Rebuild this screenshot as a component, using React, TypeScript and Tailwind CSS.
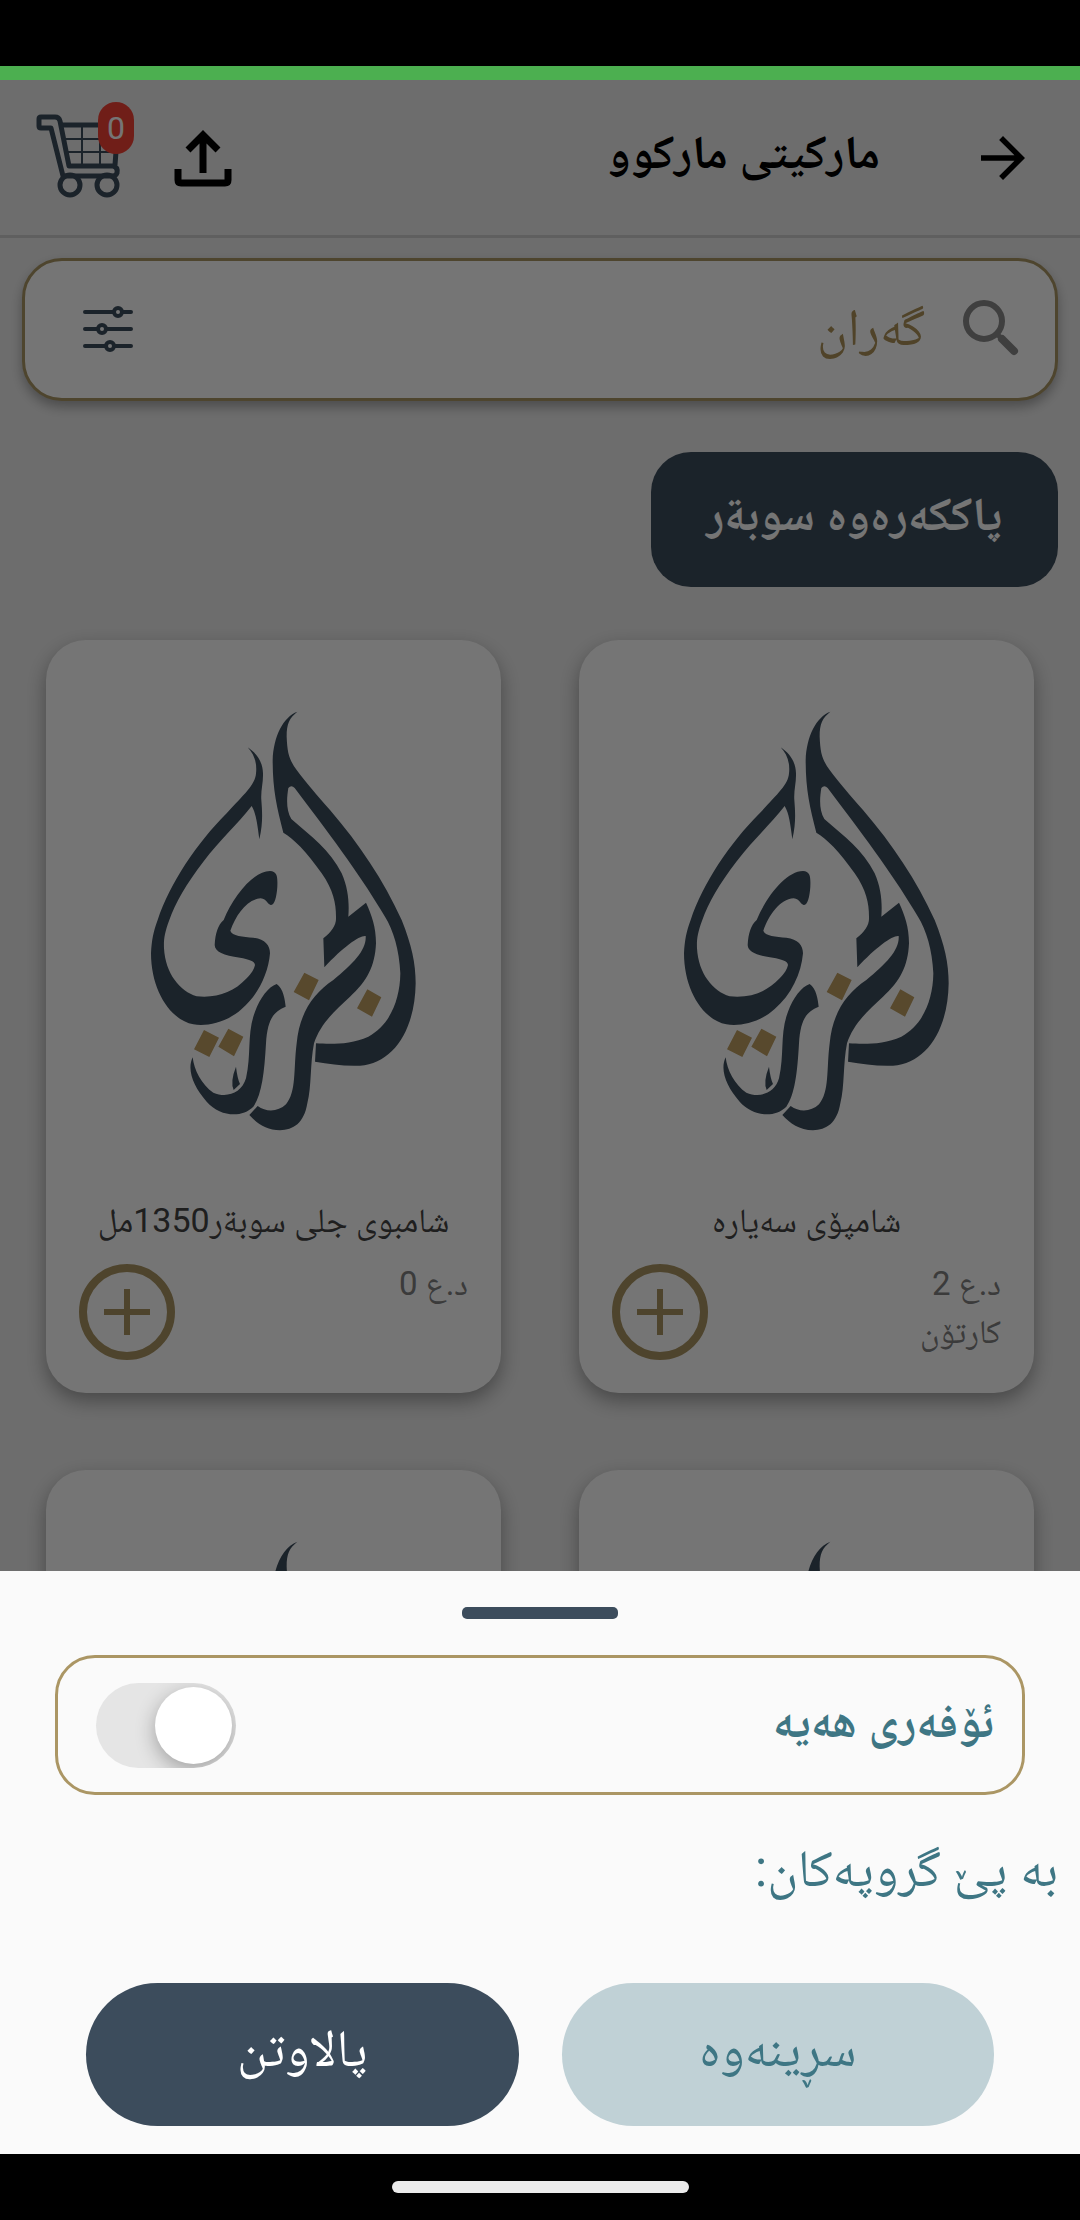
import { MdArrowForward } from "react-icons/md";

type Product = { id: number; name: string; price: string; unit?: string };

const products: Product[] = [
  { id: 1, name: "شامپۆی سەیارە", price: "د.ع 2", unit: "کارتۆن" },
  { id: 2, name: "شامبوی جلی سوبةر1350مل", price: "د.ع 0" },
];

const pendingProducts = [3, 4];

function CartIcon() {
  return (
    <svg width="88" height="88" viewBox="34 114 88 88" fill="none" stroke="#3c4c5c" aria-hidden="true">
      <path d="M82 125V166M100 125V166M64 139H117M67 152H116" strokeWidth="2" />
      <path d="M61 125H118L115 165" strokeWidth="5" />
      <path
        d="M41 117H55Q59 117 60 121L69 166H113Q118 167 117 173Q116 176 112 176H63L51 128H41Q39 128 39 126V119Q39 117 41 117Z"
        strokeWidth="5"
        strokeLinejoin="round"
      />
      <circle cx="70" cy="185" r="10" strokeWidth="5" />
      <circle cx="107" cy="185" r="10" strokeWidth="5" />
    </svg>
  );
}

function ShareIcon() {
  return (
    <svg width="60" height="60" viewBox="0 0 60 60" fill="none" stroke="#000" strokeWidth="7" aria-hidden="true">
      <path d="M30 45V8M15 22L30 7L45 22" />
      <path d="M5 41V52Q5 55 8 55H52Q55 55 55 52V41" />
    </svg>
  );
}

function SlidersIcon() {
  return (
    <svg width="52" height="52" viewBox="0 0 52 52" fill="none" stroke="#3c4c5c" strokeWidth="4" strokeLinecap="round" aria-hidden="true">
      <path d="M3 10H32M41 10H49M3 27H15M24 27H49M3 44H23M32 44H49" />
      <circle cx="36" cy="10" r="4" />
      <circle cx="20" cy="27" r="4" />
      <circle cx="28" cy="44" r="4" />
    </svg>
  );
}

function SearchIcon() {
  return (
    <svg width="58" height="58" viewBox="0 0 58 58" fill="none" stroke="#8a8a8a" aria-hidden="true">
      <circle cx="23" cy="22" r="18" strokeWidth="6" />
      <path d="M36 35L41 40" strokeWidth="5" />
      <path d="M41 40L53 52" strokeWidth="8" strokeLinecap="round" />
    </svg>
  );
}

function BrandLogo() {
  return (
    <svg className="h-[460px] w-[300px]" viewBox="-18 0 900 1380" role="img" aria-label="الجزري">
      <g fill="#3c4c5c">
        <path d="M353 172C380 190 398 215 399 250C400 280 392 300 394 330C397 370 399 400 388 448C382 400 378 370 365 348C320 405 270 450 220 515C170 580 135 640 118 690C103 730 101 750 102 775C106 850 150 905 200 919C260 925 310 908 350 865C365 850 372 838 375 825C374 812 355 808 330 803C280 797 255 785 254 765C256 730 264 705 281 690C310 620 370 543 420 543C442 545 443 560 442 590C440 620 434 645 422 645C410 642 412 627 392 625C350 628 318 675 301 722C305 738 340 740 370 743C405 748 420 765 420 790C415 850 385 915 335 957C290 998 230 1010 190 1003C120 990 63 900 63 790C65 750 70 725 83 690C120 580 200 460 290 370C340 315 376 285 378 250C382 215 370 190 353 172Z" />
        <path d="M502 65C478 85 470 100 470 140C472 190 478 210 500 240C530 280 560 315 600 360C690 465 760 570 815 690C845 765 857 820 857 880C855 1020 790 1120 690 1127C640 1129 600 1122 555 1115L558 1060C600 1062 660 1065 715 1040C780 1005 810 930 811 850C808 780 790 720 765 680C700 570 620 460 494 294Q484 284 475 294C470 325 468 360 484 387C545 440 600 480 635 550C655 595 658 640 655 680L708 638C725 675 738 710 738 760C735 830 710 875 660 920C610 965 570 1005 552 1060C540 1120 545 1190 532 1240C522 1300 490 1320 450 1321C410 1320 380 1300 358 1275L383 1248C410 1268 445 1265 468 1243C500 1205 490 1140 500 1060C508 970 550 910 610 870C670 820 710 780 707 738C690 735 640 770 583 832L580 745C605 725 620 705 618 680C618 640 610 600 575 550C530 485 490 445 460 428C440 350 428 300 428 210C430 140 460 80 502 65Z" />
        <path d="M440 882C460 895 465 930 467 950C430 965 412 990 408 1060C403 1150 395 1215 370 1250C335 1285 270 1280 230 1235C190 1190 170 1140 188 1102C192 1140 215 1185 250 1208C290 1225 335 1210 348 1165C365 1090 350 1030 375 965C390 925 415 890 440 882Z" />
        <path d="M318 1130Q322 1165 330 1182L311 1200Q300 1175 318 1130Z" />
      </g>
      <path
        fill="#bf9f62"
        d="M523 848L566 870L537 931L491 906ZM712 898L754 922L726 980L681 955ZM222 1020L267 1043L238 1101L192 1078ZM295 1016L340 1040L312 1099L265 1070Z"
      />
    </svg>
  );
}

function ProductCard({ product }: { product?: Product }) {
  return (
    <article className="flex flex-col items-center rounded-[40px] bg-white px-[33px] pt-[50px] pb-[33px] shadow-[0_8px_20px_rgba(0,0,0,0.35)]">
      <BrandLogo />
      {product && (
        <>
          <h2 className="mt-10 text-[34px] leading-[60px] whitespace-nowrap text-[#444]">{product.name}</h2>
          <div className="mt-[10px] flex w-full items-start justify-between">
            <p className="text-[33px] leading-[48px] text-[#808080]">
              {product.price}
              <br />
              {product.unit}
            </p>
            <button
              type="button"
              aria-label="زیادکردن"
              className="mt-1 flex size-24 items-center justify-center rounded-full border-8 border-[#ab9562]"
            >
              <svg width="48" height="48" viewBox="0 0 48 48" stroke="#ab9562" strokeWidth="6" aria-hidden="true">
                <path d="M1 24H47M24 1V47" />
              </svg>
            </button>
          </div>
        </>
      )}
    </article>
  );
}

function FilterSheet() {
  return (
    <section role="dialog" aria-label="پالاوتن" className="flex shrink-0 flex-col bg-[#fafafa] pt-9 pb-7">
      <div className="h-3 w-[156px] self-center rounded-[5px] bg-[#3c4c5c]" />
      <label className="mx-[55px] mt-9 flex h-[140px] items-center justify-between rounded-[40px] border-[3px] border-[#ab9664] pr-7 pl-[38px]">
        <span className="pb-2 text-[47px] leading-[72px] font-bold text-[#3e7684]">ئۆفەری هەیە</span>
        <input type="checkbox" role="switch" className="peer sr-only" />
        <span className="flex h-[85px] w-[140px] items-center overflow-hidden rounded-full bg-[#e5e5e5] p-1 peer-checked:justify-end">
          <span className="size-[77px] rounded-full bg-white shadow-[0_6px_20px_rgba(0,0,0,0.3)]" />
        </span>
      </label>
      <p className="mt-[38px] px-[22px] text-[52px] leading-[72px] text-[#3e7684]">بە پێ گروپەکان:</p>
      <div className="mt-[78px] flex gap-[43px] px-[86px] text-[52px] leading-[72px]">
        <button type="button" className="h-[143px] flex-1 rounded-full bg-[#c0d1d6] pb-3 text-[#3e7684]">
          سڕینەوە
        </button>
        <button type="button" className="h-[143px] flex-1 rounded-full bg-[#3c4c5c] pb-3 text-white">
          پالاوتن
        </button>
      </div>
    </section>
  );
}

export default function App() {
  return (
    <div
      dir="rtl"
      lang="ckb"
      className="flex h-screen flex-col overflow-hidden bg-[#eee] font-[Roboto,'Noto_Naskh_Arabic','Noto_Sans_Arabic','Noto_Sans',sans-serif]"
    >
      <div className="h-[66px] shrink-0 bg-black" />
      <div className="h-[14px] shrink-0 bg-[#4caf50]" />

      <main className="relative min-h-0 flex-1 overflow-hidden">
        <header className="flex h-[158px] items-center border-b-[3px] border-[#d0d0d0] pr-[44px] pl-[34px]">
          <button type="button" aria-label="گەڕانەوە">
            <MdArrowForward className="size-[66px]" />
          </button>
          <h1 className="mr-[90px] flex-1 pb-3 text-[47px] leading-[72px] font-bold text-black">مارکیتی مارکوو</h1>
          <button type="button" aria-label="هاوبەشکردن">
            <ShareIcon />
          </button>
          <button type="button" aria-label="سەبەتە" className="relative mr-[51px]">
            <CartIcon />
            <span className="absolute -top-3 left-16 flex h-[52px] w-9 items-center justify-center rounded-full bg-[#f44336] text-[32px] text-white">
              0
            </span>
          </button>
        </header>

        <form className="mx-[22px] mt-5 flex h-[143px] items-center rounded-[40px] border-[3px] border-[#ab9664] bg-white pr-9 pb-1 pl-[57px] shadow-[0_6px_12px_rgba(0,0,0,0.3)]">
          <SearchIcon />
          <input
            type="search"
            aria-label="گەران"
            placeholder="گەران"
            className="mr-9 min-w-0 flex-1 bg-transparent text-[52px] leading-[72px] placeholder:text-[#ae935a] placeholder:opacity-100"
          />
          <button type="button" aria-label="پالاوتن">
            <SlidersIcon />
          </button>
        </form>

        <nav className="mx-[22px] mt-[51px] flex">
          <button
            type="button"
            className="h-[135px] rounded-[40px] bg-[#3c4c5c] px-14 pb-3 text-[47px] leading-[72px] font-bold text-white"
          >
            پاککەرەوە سوبةر
          </button>
        </nav>

        <div className="mt-[53px] grid grid-cols-2 gap-x-[78px] gap-y-[77px] px-[46px]">
          {products.map((p) => (
            <ProductCard key={p.id} product={p} />
          ))}
          {pendingProducts.map((id) => (
            <ProductCard key={id} />
          ))}
        </div>

        <div className="absolute inset-0 bg-black/54" />
      </main>

      <FilterSheet />

      <footer className="flex h-[66px] shrink-0 items-center justify-center bg-black">
        <div className="h-3 w-[297px] rounded-full bg-[#ebebeb]" />
      </footer>
    </div>
  );
}
